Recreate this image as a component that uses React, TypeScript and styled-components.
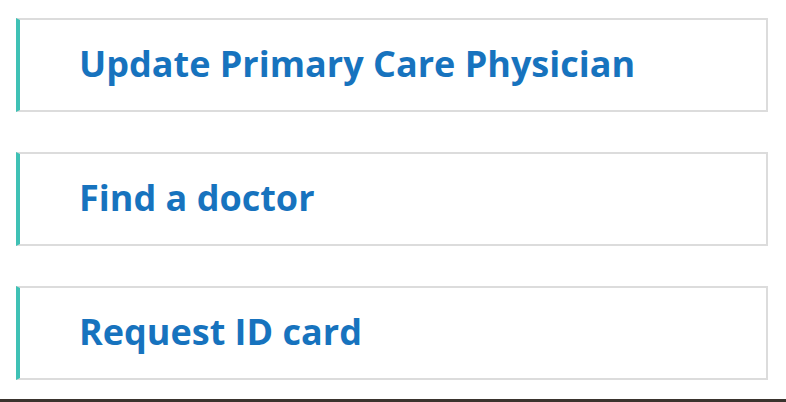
import React from "react";
import styled, { createGlobalStyle } from "styled-components";

const Global = createGlobalStyle`
  html, body { margin: 0; padding: 0; background: #ffffff; }
  body { font-family: "Open Sans", "Liberation Sans", sans-serif; }
`;

const Page = styled.div`
  width: 786px;
  height: 402px;
  display: flex;
  flex-direction: column;
  box-sizing: border-box;
  overflow: hidden;
`;

const List = styled.div`
  display: flex;
  flex-direction: column;
  gap: 40px;
  padding: 18px 18px 0 16px;
  flex: 1;
`;

const Card = styled.a`
  display: flex;
  align-items: center;
  box-sizing: border-box;
  height: 94px;
  border: 2px solid #dcdcdc;
  border-left: 4px solid #3fc1b5;
  padding-left: 59px;
  text-decoration: none;
  background: #fff;
`;

const Label = styled.span`
  font-family: "Open Sans", "Liberation Sans", sans-serif;
  font-weight: 700;
  font-size: 36px;
  line-height: 1;
  color: #1773be;
  margin-top: -3px;
`;

const BottomStrip = styled.div`
  height: 3px;
  background: #3a342e;
`;

const items = ["Update Primary Care Physician", "Find a doctor", "Request ID card"];

export default function App() {
  return (
    <Page>
      <Global />
      <List>
        {items.map((t) => (
          <Card key={t} href="#">
            <Label>{t}</Label>
          </Card>
        ))}
      </List>
      <BottomStrip />
    </Page>
  );
}
